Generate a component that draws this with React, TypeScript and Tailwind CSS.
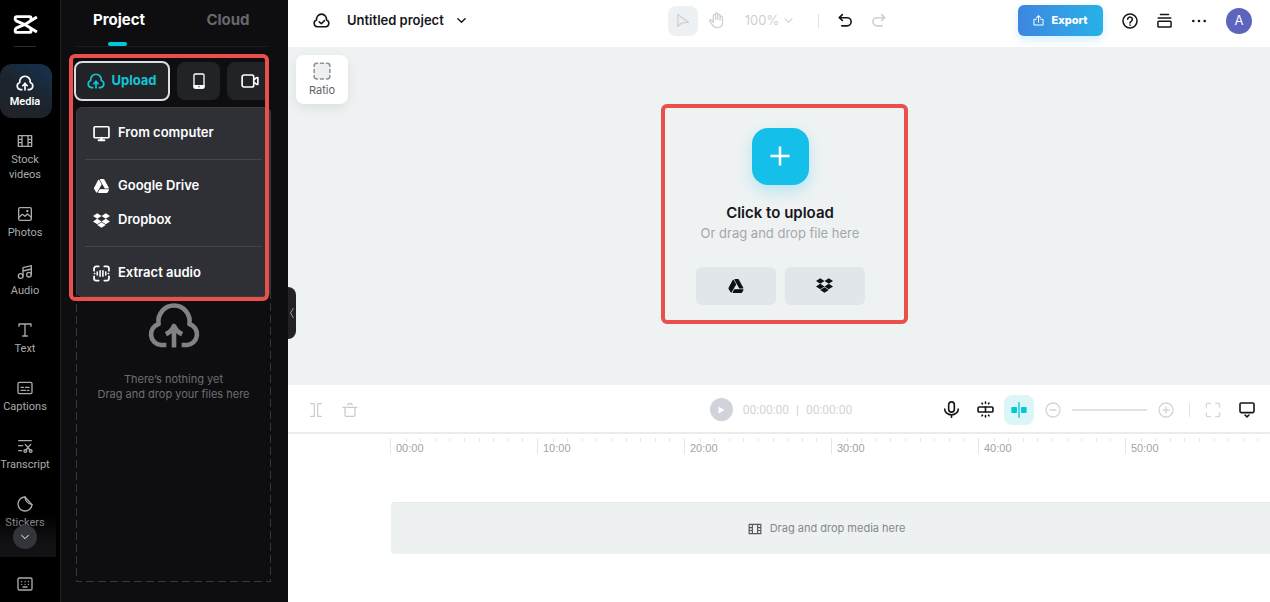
import type { ReactNode } from "react";
import { FaDropbox } from "react-icons/fa";

type IconProps = { className?: string };

/* ---------- Icons ---------- */

function Stroke({
    className,
    width = 2,
    box = "0 0 24 24",
    children,
}: {
    className?: string;
    width?: number;
    box?: string;
    children: ReactNode;
}) {
    return (
        <svg
            viewBox={box}
            className={className}
            fill="none"
            stroke="currentColor"
            strokeWidth={width}
            strokeLinecap="round"
            strokeLinejoin="round"
            aria-hidden="true"
        >
            {children}
        </svg>
    );
}

const Logo = ({ className }: IconProps) => (
    <Stroke className={className} box="0 0 26 20" width={3.1}>
        <path d="M18.800 6V3.200Q18.800 1.700 17.300 1.700H4Q2.200 1.700 2.200 3.500V4.600Q2.200 5.600 3.200 6.100L14 11 25 17.900" strokeLinecap="butt" />
        <path d="M18.800 14v2.800Q18.800 18.300 17.300 18.300H4Q2.200 18.300 2.200 16.500V15.400Q2.200 14.400 3.200 13.900L14 9 25 2.100" strokeLinecap="butt" />
    </Stroke>
);

const GoogleDrive = ({ className }: IconProps) => (
    <svg
        viewBox="0 0 24 24"
        className={className}
        fill="currentColor"
        stroke="currentColor"
        strokeWidth="1.800"
        strokeLinejoin="round"
        aria-hidden="true"
    >
        <path d="M7.800 3.500 1.500 15.500l3.200 5.500L11.300 9.500Z" />
        <path d="M10.500 2.500h4.700l7 12.500h-4.700Z" />
        <path d="M10 17.800h12.300L20.300 21.500H7.800Z" />
    </svg>
);

const CloudUpload = ({ className, width = 4.8 }: IconProps & { width?: number }) => (
    <Stroke className={className} box="0 0 52 44" width={width}>
        <path
            strokeLinecap="butt"
            d="M18.500 41H13a10.500 10.500 0 0 1-2-20.500 15.250 15.250 0 1 1 30 0A10.500 10.500 0 0 1 39 41h-5.500M26 43.500V22"
        />
        <path d="M18 30.500q5.500-2.500 8-8 2.500 5.500 8 8" strokeLinecap="butt" />
    </Stroke>
);

const CloudCheck = ({ className }: IconProps) => (
    <Stroke className={className} box="0 0 52 44" width={4.8}>
        <path d="M13 41a10.500 10.500 0 0 1-2-20.500 15.250 15.250 0 1 1 30 0A10.500 10.500 0 0 1 39 41Z" />
        <path d="m19 26 6.500 6L35 22.500" />
    </Stroke>
);

const Film = ({ className }: IconProps) => (
    <Stroke className={className} width={2}>
        <path d="M2 4h20v16H2zM7.500 4v16M16.500 4v16M2 9.500h5.500M2 14.500h5.500M16.500 9.500H22M16.500 14.500H22" />
    </Stroke>
);

const Photo = ({ className }: IconProps) => (
    <Stroke className={className}>
        <rect x="2.500" y="2.500" width="19" height="19" rx="2" />
        <path d="m3 17 5-4.500 4 3 3.500-3.500 6 5" />
        <circle cx="15.500" cy="7.500" r="0.800" />
    </Stroke>
);

const Music = ({ className }: IconProps) => (
    <Stroke className={className}>
        <circle cx="5.500" cy="18" r="3.500" />
        <circle cx="18" cy="16" r="3.500" />
        <path d="M9 18V5.500L21.500 2.500V16M9 10.500l12.500-3" />
    </Stroke>
);

const TextT = ({ className }: IconProps) => (
    <Stroke className={className}>
        <path d="M3 6.500V3h18v3.500M12 3v18M8.500 21h7" />
    </Stroke>
);

const Captions = ({ className }: IconProps) => (
    <Stroke className={className}>
        <rect x="1.500" y="3.500" width="21" height="17" rx="2" />
        <path d="M6 11h4M13 11h5M6 15.500h7M16 15.500h2" />
    </Stroke>
);

const Transcript = ({ className }: IconProps) => (
    <Stroke className={className}>
        <path d="M2.500 4h19M2.500 11.500h6M2.500 19h4.500M12.500 9.500l7 8.500M20.500 9.500l-7 8.500" />
        <circle cx="12.500" cy="19.500" r="2" />
        <circle cx="20.500" cy="19.500" r="2" />
    </Stroke>
);

const Sticker = ({ className }: IconProps) => (
    <Stroke className={className}>
        <path d="M12 1.500A10.500 10.500 0 1 0 22.500 13Z" />
        <path d="M12 1.500q.5 9 10.500 11.500" />
    </Stroke>
);

const Keyboard = ({ className }: IconProps) => (
    <Stroke className={className}>
        <rect x="1.500" y="3" width="21" height="18" rx="2" />
        <path d="M7 8.500h.1M12 8.500h.1M17 8.500h.1M7 12.500h.1M12 12.500h.1M17 12.500h.1M9 16.500h6" />
    </Stroke>
);

const ChevronDown = ({ className, width = 3 }: IconProps & { width?: number }) => (
    <Stroke className={className} width={width}>
        <path d="m4 8 8 8 8-8" />
    </Stroke>
);

const Phone = ({ className }: IconProps) => (
    <Stroke className={className}>
        <rect x="4.500" y="1.500" width="15" height="21" rx="2" />
        <path d="M4.500 19h15v1.500a2 2 0 0 1-2 2h-11a2 2 0 0 1-2-2Z" fill="currentColor" />
        <path d="M12 20.500h.1" className="stroke-[#222327]" />
    </Stroke>
);

const Camera = ({ className }: IconProps) => (
    <Stroke className={className} width={2.2}>
        <rect x="1.500" y="4" width="15.500" height="16" rx="2.500" />
        <path d="m17.500 10 3.500-2.500h1.500v9H21L17.500 14" />
    </Stroke>
);

const Monitor = ({ className }: IconProps) => (
    <Stroke className={className} width={2.4}>
        <rect x="1.500" y="2.500" width="21" height="15.500" rx="1.500" />
        <path d="M8 21.500h8M12 18v3" strokeWidth="3" />
    </Stroke>
);

const ExtractAudio = ({ className }: IconProps) => (
    <Stroke className={className} width={2.500}>
        <path d="M1.500 8V5a3 3 0 0 1 3-3H8M16 2h3.500a3 3 0 0 1 3 3v3M22.500 16v3a3 3 0 0 1-3 3H16M8 22H4.500a3 3 0 0 1-3-3v-3" />
        <path d="M2 12h.5M6 10v4M10 8v8M14 8v8M18 10v4M21.500 12h.5" strokeWidth="2.200" />
    </Stroke>
);

const Pointer = ({ className }: IconProps) => (
    <Stroke className={className}>
        <path d="M4.500 2.500v19l6-5.500 11-1Z" />
    </Stroke>
);

const Hand = ({ className }: IconProps) => (
    <Stroke className={className} width={1.800}>
        <path d="M7.500 12V5a1.600 1.600 0 0 1 3.200 0V3a1.600 1.600 0 0 1 3.200 0v2a1.600 1.600 0 0 1 3.200 0v2.500a1.700 1.700 0 0 1 3.400 0V14c0 5-3 8-7.500 8-4 0-6-2-7.500-4.500l-3-4.500c-.8-1.500 1-2.700 2.300-1.500L7.500 14.500V12M10.700 5v5.500M13.900 5v5.500M17.100 7.500v4" />
    </Stroke>
);

const Undo = ({ className }: IconProps) => (
    <Stroke className={className} width={2.600}>
        <path d="M3 7.500h11.500a6.500 6.500 0 0 1 0 13H6M7 2.500l-5 5 5 4.500" />
    </Stroke>
);

const Share = ({ className }: IconProps) => (
    <Stroke className={className} width={2.200}>
        <path d="M7 9.500H3.500a1.500 1.500 0 0 0-1.500 1.500v9.500A1.500 1.500 0 0 0 3.500 22h17a1.500 1.500 0 0 0 1.500-1.500V11a1.500 1.500 0 0 0-1.500-1.500H17M12 15.500V2M7.500 6 12 1.500 16.500 6" />
    </Stroke>
);

const Help = ({ className }: IconProps) => (
    <Stroke className={className} width={2.300}>
        <circle cx="12" cy="12" r="10.500" />
        <path d="M8.500 9.500a3.500 3.500 0 1 1 5.300 3c-1.300.8-1.800 1.300-1.800 2.500M12 18.200h.1" />
    </Stroke>
);

const Stack = ({ className }: IconProps) => (
    <Stroke className={className} width={2.400}>
        <rect x="1.500" y="13" width="21" height="9.500" rx="1.500" />
        <path d="M2 8h20M5.500 2.500h13" />
    </Stroke>
);

const Dots = ({ className }: IconProps) => (
    <svg viewBox="0 0 24 24" className={className} fill="currentColor" aria-hidden="true">
        <circle cx="3.500" cy="12" r="2" />
        <circle cx="12" cy="12" r="2" />
        <circle cx="20.500" cy="12" r="2" />
    </svg>
);

const RatioBox = ({ className }: IconProps) => (
    <Stroke className={className}>
        <rect x="1.500" y="1.500" width="21" height="21" rx="4" fill="#eef0f2" stroke="none" />
        <path d="M1.500 6V5A3.500 3.500 0 0 1 5 1.500h1M10 1.500h4M18 1.500h1A3.500 3.500 0 0 1 22.500 5v1M22.500 10v4M22.500 18v1a3.500 3.500 0 0 1-3.500 3.500h-1M14 22.500h-4M6 22.500H5A3.500 3.500 0 0 1 1.500 19v-1M1.500 14v-4" />
    </Stroke>
);

const Split = ({ className }: IconProps) => (
    <Stroke className={className} width={1.800}>
        <path d="M4 2.500H9.500v19H4M20 2.500h-5.500v19H20" />
    </Stroke>
);

const Trash = ({ className }: IconProps) => (
    <Stroke className={className} width={2}>
        <path d="M1.500 8h21M4.500 8v11.500a2 2 0 0 0 2 2h11a2 2 0 0 0 2-2V8M8.500 4a5 5 0 0 1 7 0" />
    </Stroke>
);

const Mic = ({ className }: IconProps) => (
    <Stroke className={className} width={2.300}>
        <rect x="8" y="1.200" width="8" height="14.500" rx="4" />
        <path d="M2.500 11.500a9.500 8 0 0 0 19 0M12 19.500V23" />
    </Stroke>
);

const AutoSplit = ({ className }: IconProps) => (
    <Stroke className={className} width={2.300}>
        <rect x="1.500" y="8.500" width="21" height="7" rx="1.500" />
        <path d="M12 8.500v7M12 1.500v1.800M7 3l.7 1M17 3l-.7 1M12 22.500v-1.800M7 21l.7-1M17 21l-.7-1" />
    </Stroke>
);

const Snap = ({ className }: IconProps) => (
    <svg viewBox="0 0 24 24" className={className} fill="currentColor" aria-hidden="true">
        <rect x="0.500" y="7.500" width="8.500" height="9" rx="1" />
        <rect x="15" y="7.500" width="8.500" height="9" rx="1" />
        <rect x="11" y="0" width="2" height="24" rx="1" />
    </svg>
);

const ZoomMark = ({ className, plus }: IconProps & { plus?: boolean }) => (
    <Stroke className={className} width={2}>
        <circle cx="12" cy="12" r="10.500" />
        <path d={plus ? "M7.500 12h9M12 7.500v9" : "M7.500 12h9"} />
    </Stroke>
);

const Fullscreen = ({ className }: IconProps) => (
    <Stroke className={className} width={2}>
        <path d="M2 7.500V4a2 2 0 0 1 2-2h4M16 2h4a2 2 0 0 1 2 2v3.500M22 16.500V20a2 2 0 0 1-2 2h-4M8 22H4a2 2 0 0 1-2-2v-3.500" />
    </Stroke>
);

const Display = ({ className }: IconProps) => (
    <Stroke className={className} width={2.400}>
        <rect x="1.500" y="1.500" width="21" height="14.500" rx="2" />
        <path d="m9 19.500 3 2.800 3-2.800" />
    </Stroke>
);

/* ---------- Sidebar ---------- */

const navItems = [
    { label: "Media", icon: CloudUpload, active: true },
    { label: "Stock videos", icon: Film },
    { label: "Photos", icon: Photo },
    { label: "Audio", icon: Music },
    { label: "Text", icon: TextT },
    { label: "Captions", icon: Captions },
    { label: "Transcript", icon: Transcript },
    { label: "Stickers", icon: Sticker },
];

function Sidebar() {
    return (
        <aside className="flex w-[61px] shrink-0 flex-col border-r border-[#222226] bg-black text-[#a9abad]">
            <div className="relative min-h-0 flex-1 overflow-hidden">
                <div className="flex w-[50px] flex-col items-center pt-[15px]">
                    <Logo className="h-[19px] w-[25px] text-white" />
                    <span className="mt-3 h-px w-[22px] bg-[#2c2c30]" />
                </div>
                <nav className="mt-[17px] flex w-[52px] flex-col gap-1 font-['Roboto',sans-serif]">
                    {navItems.map(({ label, icon: Icon, active }) => (
                        <a
                            key={label}
                            href="#"
                            className={
                                active
                                    ? "flex flex-col items-center rounded-xl bg-[linear-gradient(215deg,#143350_0%,#1d232c_55%,#222327_100%)] pt-[10px] pr-0.5 pb-[9px] text-white"
                                    : "flex flex-col items-center pt-[10px] pr-0.5 pb-[9px]"
                            }
                        >
                            <Icon className={active ? "h-[18px] w-[18px]" : "h-[18px] w-4"} />
                            <span
                                className={
                                    active
                                        ? "mt-0.5 text-[11px] leading-[15px] font-semibold"
                                        : "mt-0.5 w-min text-center text-[11px] leading-[15px]"
                                }
                            >
                                {label}
                            </span>
                        </a>
                    ))}
                </nav>
                {/* Scroll hint over the last item */}
                <div className="absolute bottom-0 left-0 flex h-[42px] w-14 items-end bg-gradient-to-b from-transparent to-[#121214] to-70% pb-2 pl-[13px]">
                    <button
                        aria-label="More tools"
                        className="flex size-6 items-center justify-center rounded-full bg-[#34353a]"
                    >
                        <ChevronDown className="size-[10px] text-white" width={2.4} />
                    </button>
                </div>
            </div>
            <div className="flex h-[45px] w-[50px] shrink-0 items-center justify-center pt-2">
                <button aria-label="Shortcuts">
                    <Keyboard className="size-4" />
                </button>
            </div>
        </aside>
    );
}

/* ---------- Media panel ---------- */

const menuItem = "flex h-[34px] w-full items-center gap-2 pl-4 text-left text-[13px] font-semibold text-white";

function UploadMenu() {
    return (
        <div className="absolute top-[53px] left-[15px] w-[195px] rounded-md border border-[#3a3b41] bg-[#2f3036] pt-2 pb-1.5">
            <button className={menuItem}>
                <Monitor className="size-[17px]" />
                From computer
            </button>
            <hr className="mx-2 my-[9px] border-[#45464b]" />
            <button className={menuItem}>
                <GoogleDrive className="h-4 w-[17px]" />
                Google Drive
            </button>
            <button className={menuItem}>
                <FaDropbox className="size-[17px]" />
                Dropbox
            </button>
            <hr className="mx-2 my-[9px] border-[#45464b]" />
            <button className={menuItem}>
                <ExtractAudio className="size-[17px]" />
                Extract audio
            </button>
        </div>
    );
}

function MediaPanel() {
    return (
        <section className="relative flex w-[227px] shrink-0 flex-col bg-[#0e0e11]">
            <div className="mr-5 ml-[15px] flex h-[47px] border-b border-[#1e1e22] text-[15px] font-bold">
                <button className="relative w-[86px] pb-1.5 text-white">
                    Project
                    <span className="absolute bottom-0 left-8 h-1 w-[19px] rounded-sm bg-[#00c7da]" />
                </button>
                <button className="flex-1 pb-1.5 pl-[26px] text-[#68686c]">Cloud</button>
            </div>

            <div className="relative z-10 mt-[7px] h-[60px]">
                <div className="flex items-center gap-[7px] overflow-hidden pt-[7px] pr-5 pl-[13px]">
                    <button className="flex h-10 w-24 shrink-0 items-center justify-center gap-1.5 rounded-lg border-2 border-[#dcdce2] bg-[#222327] text-[13px] font-bold text-[#14c3d6]">
                        <CloudUpload className="h-4 w-[18px]" />
                        Upload
                    </button>
                    <button
                        aria-label="Upload from phone"
                        className="flex h-[38px] w-[43px] shrink-0 items-center justify-center rounded-lg bg-[#222327] text-white"
                    >
                        <Phone className="size-4" />
                    </button>
                    <button
                        aria-label="Record"
                        className="flex h-[38px] flex-1 items-center justify-center rounded-l-lg bg-[#222327] pl-1 text-white"
                    >
                        <Camera className="size-[18px]" />
                    </button>
                </div>
                <UploadMenu />
                {/* Highlight round the upload options */}
                <div className="pointer-events-none absolute top-0 left-2 h-[247px] w-[200px] rounded-md border-4 border-[#e9504c]" />
            </div>

            <div className="relative mr-[17px] mb-5 ml-[15px] flex flex-1 flex-col items-center justify-center pt-2 text-[#6d6d71]">
                {/* Only the inner half of the stroke shows, which leaves a 1px dashed line */}
                <svg className="absolute inset-0 size-full overflow-hidden" aria-hidden="true">
                    <rect
                        width="100%"
                        height="100%"
                        fill="none"
                        stroke="#37373b"
                        strokeWidth="2"
                        strokeDasharray="8 4"
                    />
                </svg>
                <CloudUpload className="h-[45px] w-[54px] text-[#828286]" width={4.5} />
                <p className="mt-6 text-center text-[11px] leading-[15px]">
                    There’s nothing yet
                    <br />
                    Drag and drop your files here
                </p>
            </div>

            <button
                aria-label="Collapse panel"
                className="absolute top-[287px] left-full z-10 flex h-[52px] w-2 items-center justify-center rounded-r-lg bg-[#222226] text-[#97979b]"
            >
                <svg viewBox="0 0 6 14" className="h-3.5 w-1.5" fill="none" stroke="currentColor" aria-hidden="true">
                    <path d="M4.500 2 1.500 7l3 5" />
                </svg>
            </button>
        </section>
    );
}

/* ---------- Top bar ---------- */

function TopBar() {
    return (
        <header className="grid h-[47px] shrink-0 grid-cols-[1fr_auto_1fr] items-center bg-white px-[18px] pb-1.5 text-[#15161a]">
            <div className="flex items-center pl-[7px]">
                <CloudCheck className="h-[15px] w-[17px]" />
                <button className="ml-[17px] flex items-center gap-3 text-[13px] font-semibold">
                    Untitled project
                    <ChevronDown className="size-[11px]" />
                </button>
            </div>

            <div className="flex items-center pr-1 text-[#cdd0d4]">
                <button
                    aria-label="Select"
                    className="flex size-[30px] items-center justify-center rounded-lg bg-[#eef1f3]"
                >
                    <Pointer className="size-[15px]" />
                </button>
                <button aria-label="Pan" className="ml-[10px]">
                    <Hand className="size-[17px]" />
                </button>
                <button className="ml-5 flex items-center gap-1 text-[13px]">
                    100%
                    <ChevronDown className="size-[11px]" width={2.2} />
                </button>
                <span className="ml-6 h-[14px] w-px bg-[#dfe1e4]" />
                <button aria-label="Undo" className="ml-[19px] text-[#15161a]">
                    <Undo className="size-[15px]" />
                </button>
                <button aria-label="Redo" className="ml-[18px]">
                    <Undo className="size-[15px] -scale-x-100" />
                </button>
            </div>

            <div className="flex items-center justify-end gap-[19px]">
                <button className="flex h-[31px] w-[85px] items-center justify-center gap-[7px] rounded-md bg-gradient-to-r from-[#3c86e0] to-[#27b1e8] text-[11px] font-extrabold text-white shadow-[0_4px_8px_rgba(39,177,232,0.2)]">
                    <Share className="size-[11px]" />
                    Export
                </button>
                <button aria-label="Help">
                    <Help className="size-4" />
                </button>
                <button aria-label="Layers">
                    <Stack className="size-[15px]" />
                </button>
                <button aria-label="More">
                    <Dots className="size-4" />
                </button>
                <button className="size-[26px] rounded-full bg-[#5c64bd] text-[13px] text-white">A</button>
            </div>
        </header>
    );
}

/* ---------- Canvas ---------- */

function Canvas() {
    return (
        <main className="relative flex min-h-0 flex-1 items-center justify-center bg-[#eef2f3] pl-0.5">
            <button className="absolute top-2 left-2 flex h-[49px] w-[52px] flex-col items-center rounded-lg bg-white pt-[7px] text-[11px] text-[#5f6266] shadow-[0_4px_12px_rgba(0,0,0,0.08)]">
                <RatioBox className="size-[18px] text-[#8d9094]" />
                <span className="mt-0.5 leading-4">Ratio</span>
            </button>

            <div className="relative flex flex-col items-center">
                <button
                    aria-label="Add media"
                    className="flex size-[57px] items-center justify-center rounded-2xl bg-[#14c0ea] text-white shadow-[0_6px_14px_rgba(20,192,234,0.25)]"
                >
                    <svg viewBox="0 0 20 20" className="size-5" stroke="currentColor" strokeWidth="2.500" aria-hidden="true">
                        <path d="M10 0.500v19M0.500 10h19" />
                    </svg>
                </button>
                <h2 className="mt-[18px] text-[15px] leading-5 font-semibold text-[#15161a]">Click to upload</h2>
                <p className="text-[13px] leading-5 text-[#a5a7ab]">Or drag and drop file here</p>
                <div className="mt-6 flex gap-[9px] text-[#101114]">
                    <button
                        aria-label="Google Drive"
                        className="flex h-[38px] w-20 items-center justify-center rounded-md bg-[#e0e6ea]"
                    >
                        <GoogleDrive className="size-4" />
                    </button>
                    <button
                        aria-label="Dropbox"
                        className="flex h-[38px] w-20 items-center justify-center rounded-md bg-[#e0e6ea]"
                    >
                        <FaDropbox className="size-[17px]" />
                    </button>
                </div>
                {/* Highlight round the upload box */}
                <div className="pointer-events-none absolute -top-6 -right-[43px] -bottom-[19px] -left-[35px] rounded-md border-4 border-[#e9504c]" />
            </div>
        </main>
    );
}

/* ---------- Timeline ---------- */

const tool = "flex size-[30px] shrink-0 items-center justify-center rounded-lg";
const marks = ["00:00", "10:00", "20:00", "30:00", "40:00", "50:00"];

function Timeline() {
    return (
        <section className="h-[217px] shrink-0 bg-white">
            <div className="grid h-[49px] grid-cols-[1fr_auto_1fr] items-center border-b-2 border-[#ececef] px-2 pt-0.5">
                <div className="flex gap-1 pl-[5px] text-[#c9ccd0]">
                    <button aria-label="Split" className={tool}>
                        <Split className="size-4" />
                    </button>
                    <button aria-label="Delete" className={tool}>
                        <Trash className="size-4" />
                    </button>
                </div>

                <div className="flex items-center pl-1 font-['Roboto',sans-serif] text-[12px] text-[#d2d4d8]">
                    <button
                        aria-label="Play"
                        className="flex size-[23px] items-center justify-center rounded-full bg-[#d0d4da] text-white"
                    >
                        <svg viewBox="0 0 8 8" className="size-2" fill="currentColor" aria-hidden="true">
                            <path d="M1.500 0.500v7L7.500 4Z" />
                        </svg>
                    </button>
                    <span className="ml-[10px]">00:00:00</span>
                    <span className="mx-[7px]">|</span>
                    <span>00:00:00</span>
                </div>

                <div className="flex items-center justify-end gap-1 text-[#d3d5d8]">
                    <button aria-label="Record voice" className={`${tool} text-[#15161a]`}>
                        <Mic className="size-[17px]" />
                    </button>
                    <button aria-label="Auto split" className={`${tool} text-[#15161a]`}>
                        <AutoSplit className="size-[17px]" />
                    </button>
                    <button aria-label="Snap" className={`${tool} bg-[#dcf6f7] text-[#00c7da]`}>
                        <Snap className="size-4" />
                    </button>
                    <button aria-label="Zoom out" className={tool}>
                        <ZoomMark className="size-4" />
                    </button>
                    <input
                        type="range"
                        aria-label="Timeline zoom"
                        disabled
                        className="h-0.5 w-[75px] appearance-none bg-[#e0e2e4] [&::-webkit-slider-thumb]:appearance-none"
                    />
                    <button aria-label="Zoom in" className={tool}>
                        <ZoomMark className="size-4" plus />
                    </button>
                    <span className="mx-1 h-[14px] w-px bg-[#dfe1e4]" />
                    <button aria-label="Fit" className={tool}>
                        <Fullscreen className="size-4" />
                    </button>
                    <button aria-label="Preview" className={`${tool} text-[#15161a]`}>
                        <Display className="size-4" />
                    </button>
                </div>
            </div>

            {/* Ruler */}
            <div className="ml-[102px] flex overflow-hidden pt-1">
                {marks.map((mark) => (
                    <div key={mark} className="relative flex h-4 w-[147px] shrink-0 border-l border-[#e4e6e9]">
                        {Array.from({ length: 10 }, (_, i) => (
                            <span
                                key={i}
                                className="h-1 flex-1 border-l border-[#e4e6e9] first:border-transparent"
                            />
                        ))}
                        <span className="absolute top-1 left-[5px] font-['Liberation_Sans',sans-serif] text-[11px] leading-[13px] text-[#9fa3a9]">
                            {mark}
                        </span>
                    </div>
                ))}
            </div>

            <div className="mt-12 ml-[103px] flex h-[52px] items-center justify-center gap-2 rounded-l-sm border-t border-[#e6eaeb] bg-[#edf1f2] pr-2 text-[11px] text-[#85888c]">
                <Film className="size-[14px] text-[#55585d]" />
                Drag and drop media here
            </div>
        </section>
    );
}

export default function App() {
    return (
        <div className="flex h-screen overflow-hidden font-['Inter',sans-serif]">
            <Sidebar />
            <MediaPanel />
            <div className="flex min-w-0 flex-1 flex-col">
                <TopBar />
                <Canvas />
                <Timeline />
            </div>
        </div>
    );
}
